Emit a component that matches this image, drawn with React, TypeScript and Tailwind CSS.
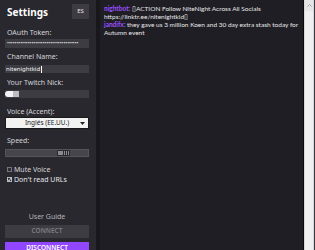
import React from "react";

const font = { fontFamily: '"Segoe UI", "Noto Sans", "Open Sans", sans-serif' };
const chatFont = { fontFamily: 'Lato, "Noto Sans", sans-serif' };

function Label({ children, className = "" }: { children: React.ReactNode; className?: string }) {
  return (
    <div className={`h-[9px] text-[7px] leading-[9px] text-[#d6d5da] ${className}`}>{children}</div>
  );
}

export default function App() {
  return (
    <div className="flex h-[250px] w-[315px] overflow-hidden bg-[#18171c]" style={font}>
      {/* Left settings panel */}
      <div className="h-[250px] w-[96px] shrink-0 overflow-hidden bg-[#29282e] pl-[5px] pr-[7px]">
        <div className="mt-[4px] flex h-[15px] items-center justify-between">
          <span className="pl-[2px] text-[10px] font-bold leading-none text-white">Settings</span>
          <div className="flex h-[15px] w-[17px] items-center justify-center bg-[#3d3c42] text-[6px] text-[#e6e5ea]">
            ES
          </div>
        </div>

        <Label className="mt-[9px] pl-[2px]">OAuth Token:</Label>
        <div className="mt-[2px] flex h-[9px] items-center overflow-hidden whitespace-nowrap bg-[#3d3c42] pl-[2px] text-[5px] leading-none text-[#e8e8ea]">
          ••••••••••••••••••••••••••••••••••••••
        </div>

        <Label className="mt-[4px] pl-[2px]">Channel Name:</Label>
        <div className="mt-[4px] flex h-[8px] items-center bg-[#3d3c42] pl-[1px] text-[6px] leading-none text-[#f0f0f2]">
          nitenightkid
          <span className="ml-[1px] h-[7px] w-[1px] bg-white" />
        </div>

        <Label className="mt-[5px] pl-[2px]">Your Twitch Nick:</Label>
        <div className="mt-[3px] flex h-[8px] items-center bg-[#3d3c42]">
          <div className="h-[6px] w-[8px] rounded-l-[3px] bg-[#f4f4f6]" />
          <div className="h-[6px] w-[6px] bg-[#bdbcc2]" />
        </div>

        <Label className="mt-[9px] pl-[2px]">Voice (Accent):</Label>
        <div className="relative mt-[1px] flex h-[12px] items-center justify-center border border-[#1a1a1a] bg-[#f2f2f2] text-[6.5px] leading-none text-[#1a1a1a]">
          Inglés (EE.UU.)
          <svg className="absolute right-[3px] top-[4px]" width="5" height="3" viewBox="0 0 5 3">
            <path d="M0 0 L5 0 L2.5 3 Z" fill="#222" />
          </svg>
        </div>

        <Label className="mt-[7px] pl-[2px]">Speed:</Label>
        <div className="mt-[4px] flex h-[8px] items-center border border-[#55545a] bg-[#46454b]">
          <div className="ml-[51px] flex h-[6px] w-[13px] items-center justify-end gap-[1px] border border-[#2a2a2a] bg-[#8a898f] pr-[1px]">
            <div className="h-[4px] w-[1px] bg-[#2a2a2a]" />
            <div className="h-[4px] w-[1px] bg-[#2a2a2a]" />
            <div className="h-[4px] w-[1px] bg-[#2a2a2a]" />
          </div>
        </div>

        <div className="mt-[7px] flex h-[10px] items-center gap-[2px] pl-[2px] text-[7px] leading-none text-[#d6d5da]">
          <div className="h-[5px] w-[5px] border border-[#77767c] bg-[#2f2e34]" />
          Mute Voice
        </div>
        <div className="flex h-[10px] items-center gap-[2px] pl-[2px] text-[7px] leading-none text-[#e6e5ea]">
          <div className="relative h-[5px] w-[5px] border border-[#b8b7bd] bg-[#2f2e34]">
            <svg className="absolute -left-[1px] -top-[1px]" width="5" height="5" viewBox="0 0 5 5">
              <path d="M0.8 2.6 L2 3.8 L4.4 0.8" stroke="#fff" strokeWidth="0.9" fill="none" />
            </svg>
          </div>
          Don't read URLs
        </div>

        <div className="mt-[28px] h-[9px] text-center text-[7px] leading-[9px] text-[#b5b4ba]">User Guide</div>
        <div className="mt-[4px] flex h-[13px] items-center justify-center bg-[#3d3c42] text-[6.5px] font-semibold leading-none text-[#7d7c82]">
          CONNECT
        </div>
        <div className="mt-[4px] flex h-[13px] items-center justify-center bg-[#9147ff] text-[6.5px] font-semibold leading-none text-white">
          DISCONNECT
        </div>
      </div>

      {/* Divider */}
      <div className="w-[4px] shrink-0 bg-[#18171c]" />

      {/* Chat area */}
      <div
        className="flex-1 bg-[#1f1e24] pl-[4px] pr-[2px] pt-[5px] text-[6.5px] leading-[8px] text-[#e8e8ea]"
        style={chatFont}
      >
        <div className="whitespace-nowrap">
          <span className="font-bold text-[#9b50ff]">nightbot:</span>
          <span> ▯ACTION Follow NiteNight Across All Socials</span>
        </div>
        <div>https://linktr.ee/nitenightkid▯</div>
        <div className="whitespace-nowrap">
          <span className="font-bold text-[#9b50ff]">jandifx:</span>
          <span> they gave us 3 million Koen and 30 day extra stash today for</span>
        </div>
        <div>Autumn event</div>
      </div>

      {/* Scrollbar */}
      <div className="w-[1px] shrink-0 bg-[#0a0a0c]" />
      <div className="flex w-[10px] shrink-0 flex-col border-x border-[#d8d8d8] bg-[#f0f0f0]">
        <div className="flex h-[11px] items-center justify-center bg-[#e6e6e6]">
          <svg width="5" height="3" viewBox="0 0 5 3">
            <path d="M0.5 2.5 L2.5 0.5 L4.5 2.5" stroke="#9a9a9a" strokeWidth="0.9" fill="none" />
          </svg>
        </div>
      </div>
      <div className="w-[1px] shrink-0 bg-[#3a393f]" />
    </div>
  );
}
